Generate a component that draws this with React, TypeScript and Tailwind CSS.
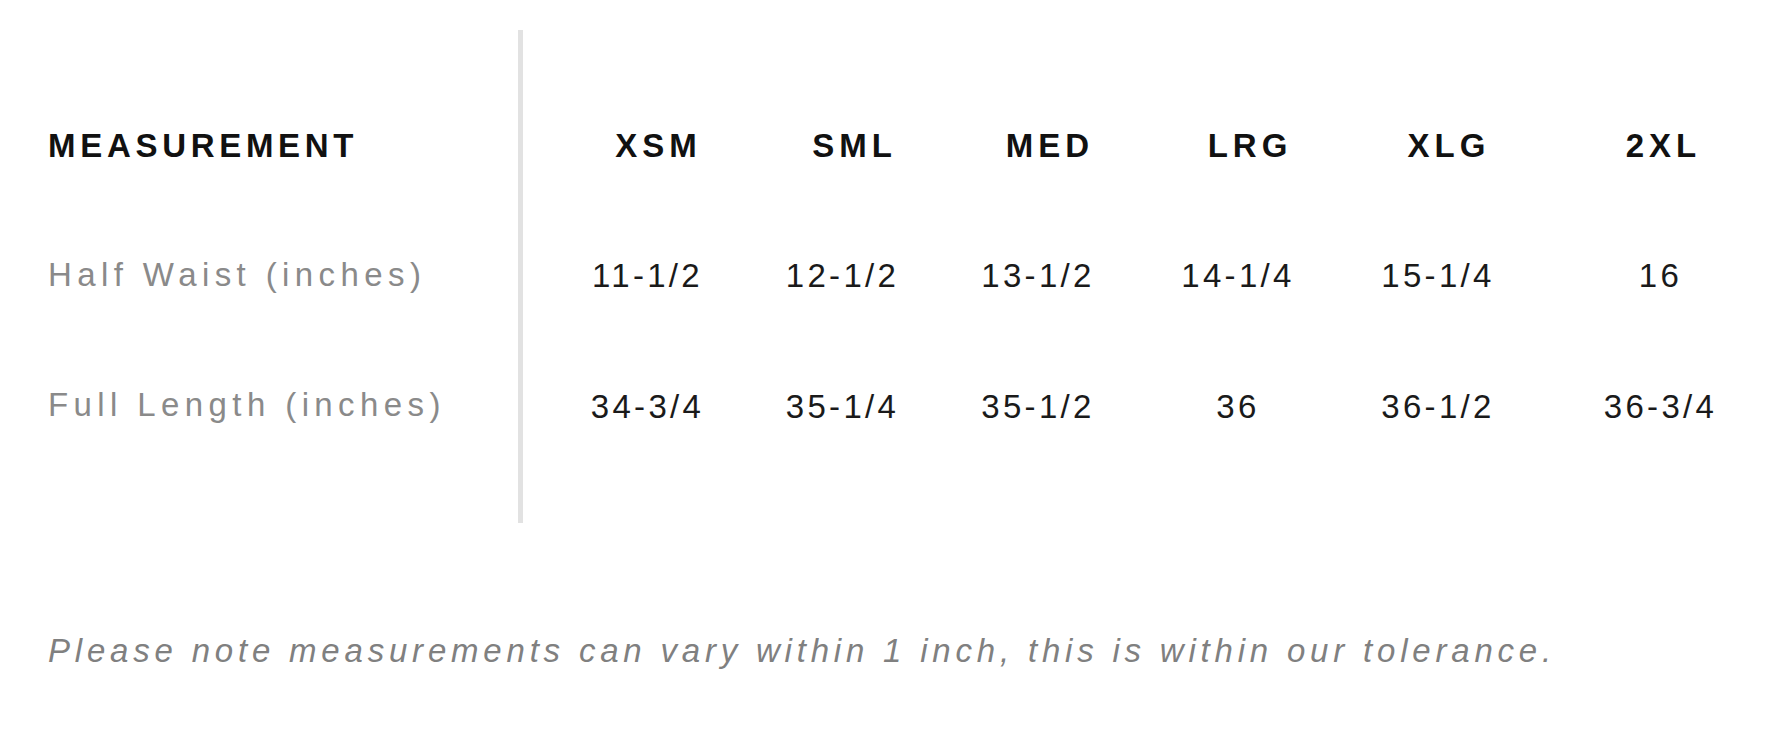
const sizes = ["XSM", "SML", "MED", "LRG", "XLG", "2XL"];

const rows = [
  { label: "Half Waist (inches)", values: ["11-1/2", "12-1/2", "13-1/2", "14-1/4", "15-1/4", "16"] },
  { label: "Full Length (inches)", values: ["34-3/4", "35-1/4", "35-1/2", "36", "36-1/2", "36-3/4"] },
];

// fixed column widths so each size lines up like the original chart
const colWidths = ["w-[195px]", "w-[195px]", "w-[196px]", "w-[204px]", "w-[196px]", "w-[229px] pl-5"];
const headPad = ["pl-[22px]", "pl-[24px]", "pl-[24px]", "pl-[24px]", "pl-[22px]", "pl-[6px]"];

export default function App() {
  return (
    <div className="min-h-[734px] w-full overflow-hidden bg-white pt-[30px] font-['Liberation_Sans',Arial,sans-serif]">
      <div className="flex">
        <div className="w-[523px] shrink-0 border-r-[5px] border-[#e2e2e2] pl-12 pt-[52px] pb-[53px]">
          <div className="flex h-[128px] items-center text-[33px] font-bold tracking-[4.7px] text-[#111]">
            MEASUREMENT
          </div>
          {rows.map((row) => (
            <div key={row.label} className="flex h-[130px] items-center text-[33px] tracking-[5.4px] text-[#8a8a8a]">
              {row.label}
            </div>
          ))}
        </div>

        <div className="ml-[27px] pt-[52px]">
          <div className="flex h-[128px] items-center">
            {sizes.map((s, i) => (
              <div key={s} className={`${colWidths[i]} shrink-0 text-center`}>
                <span className={`${headPad[i]} inline-block text-[33px] font-bold tracking-[5px] text-[#111]`}>{s}</span>
              </div>
            ))}
          </div>
          {rows.map((row) => (
            <div key={row.label} className="flex h-[131px] items-center">
              {row.values.map((v, i) => (
                <div key={i} className={`${colWidths[i]} shrink-0 text-center text-[33px] tracking-[3.3px] text-[#1a1a1a]`}>
                  {v}
                </div>
              ))}
            </div>
          ))}
        </div>
      </div>

      <p className="mt-[108px] pl-12 text-[33px] leading-[40px] italic tracking-[4.8px] text-[#808080]">
        Please note measurements can vary within 1 inch, this is within our tolerance.
      </p>
    </div>
  );
}
